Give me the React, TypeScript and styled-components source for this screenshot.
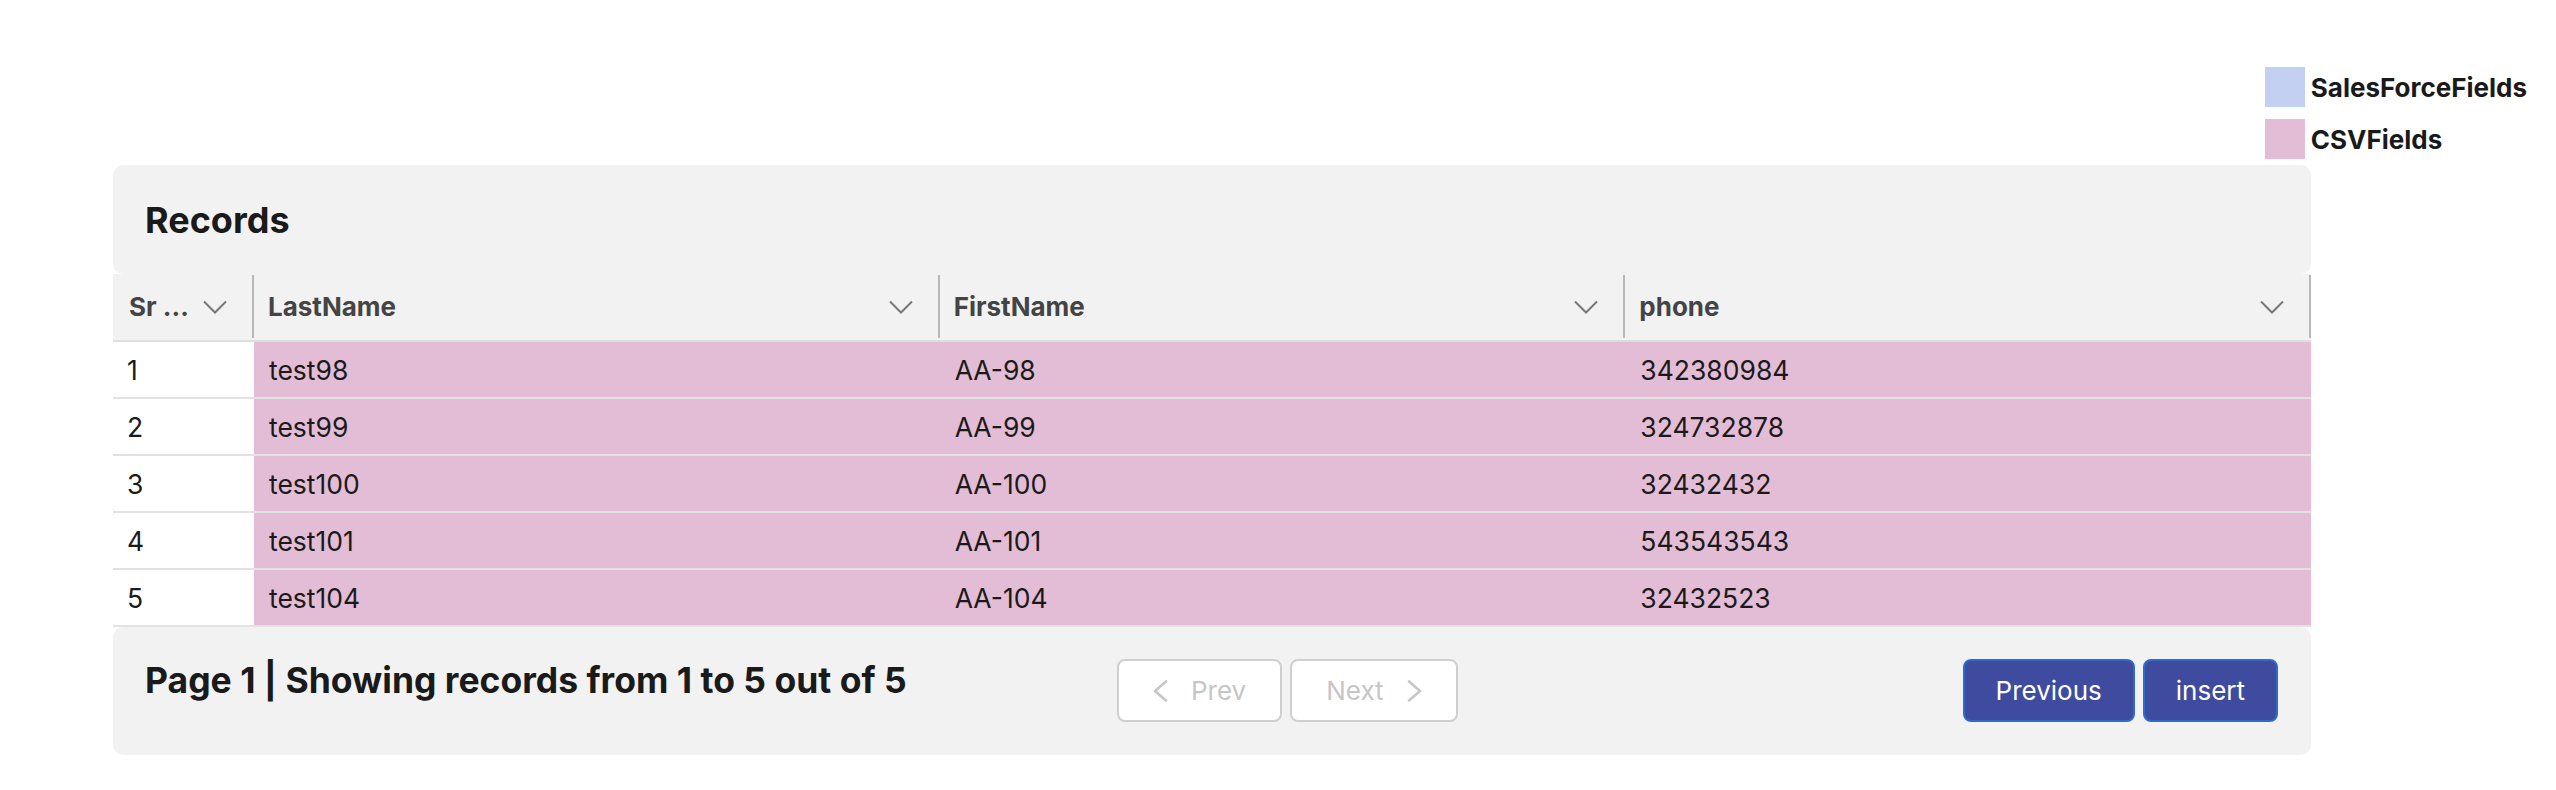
import React from "react";
import styled, { createGlobalStyle } from "styled-components";

const GlobalStyle = createGlobalStyle`
  html, body {
    margin: 0;
    padding: 0;
    background: #ffffff;
    font-family: Inter, "Noto Sans", "Liberation Sans", sans-serif;
    color: #1a1a1a;
  }
  * { box-sizing: border-box; }
`;

const Page = styled.div`
  width: 2556px;
  padding: 67px 0 33px 113px;
  display: flex;
  flex-direction: column;
`;

const LegendRow = styled.div`
  display: flex;
  justify-content: flex-end;
  padding-right: 29px;
`;

const LegendList = styled.div`
  display: flex;
  flex-direction: column;
  gap: 12px;
`;

const LegendItem = styled.div`
  display: flex;
  align-items: center;
  gap: 6px;
`;

const Swatch = styled.span<{ $color: string }>`
  display: block;
  width: 40px;
  height: 40px;
  background: ${(p) => p.$color};
`;

const LegendLabel = styled.span`
  font-size: 26px;
  font-weight: 700;
  color: #1a1a1a;
`;

const Card = styled.div`
  margin-top: 6px;
  width: 2198px;
  display: flex;
  flex-direction: column;
`;

const TitleBox = styled.div`
  height: 109px;
  background: #f2f2f2;
  border-radius: 10px;
  padding: 0 32px;
  display: flex;
  align-items: center;
`;

const Title = styled.h2`
  margin: 0;
  font-size: 36px;
  font-weight: 700;
  color: #1a1a1a;
`;

const Grid = styled.div`
  display: grid;
  grid-template-columns: 141px repeat(3, 1fr);
`;

const HeaderRow = styled(Grid)`
  background: #f2f2f2;
  border-bottom: 2px solid #dedede;
  height: 68px;
`;

const HeaderCell = styled.div<{ $first?: boolean }>`
  display: flex;
  align-items: center;
  justify-content: space-between;
  gap: 6px;
  padding: 0 25px 0 ${(p) => (p.$first ? "16px" : "14px")};
  border-right: 2px solid #b8b8b8;
  margin: 1px 0 2px;
  font-size: 26px;
  font-weight: 700;
  color: #444444;
  white-space: nowrap;
  overflow: hidden;
`;

const DataRow = styled(Grid)`
  border-bottom: 2px solid #e2e2e2;
  height: 57px;
`;

const DataCell = styled.div<{ $first?: boolean }>`
  display: flex;
  align-items: center;
  padding-left: ${(p) => (p.$first ? "14px" : "15px")};
  background: ${(p) => (p.$first ? "#ffffff" : "#e3bcd6")};
  font-size: 26.5px;
  color: #1a1a1a;
`;

const Footer = styled.div`
  background: #f2f2f2;
  border-radius: 10px;
  padding: 32px 33px 33px 32px;
  display: grid;
  grid-template-columns: 972px auto 1fr auto;
  align-items: start;
`;

const FooterText = styled.h3`
  margin: 0;
  font-size: 35.5px;
  font-weight: 700;
  color: #1a1a1a;
  white-space: nowrap;
`;

const Pager = styled.div`
  display: flex;
  gap: 8px;
`;

const PagerButton = styled.button`
  height: 63px;
  padding: 0 34px;
  display: flex;
  align-items: center;
  gap: 23px;
  background: #ffffff;
  border: 2px solid #cfcfcf;
  border-radius: 8px;
  color: #c6c6c6;
  font-family: inherit;
  font-size: 26px;
`;

const Actions = styled.div`
  grid-column: 4;
  display: flex;
  gap: 8px;
`;

const ActionButton = styled.button`
  height: 63px;
  padding: 0 31px;
  background: #3f4b9e;
  border: 2px solid #2f6bcc;
  border-radius: 8px;
  color: #ffffff;
  font-family: inherit;
  font-size: 26px;
`;

const Chevron = () => (
  <svg width="24" height="14" viewBox="0 0 24 14" fill="none">
    <polyline points="1,1.5 12,12.5 23,1.5" stroke="#777777" strokeWidth="2" />
  </svg>
);

const PagerArrow = ({ dir }: { dir: "left" | "right" }) => (
  <svg width="15" height="22" viewBox="0 0 15 22" fill="none">
    <polyline
      points={dir === "left" ? "13,1.5 2,11 13,20.5" : "2,1.5 13,11 2,20.5"}
      stroke="#c6c6c6"
      strokeWidth="2.6"
      strokeLinecap="round"
      strokeLinejoin="round"
    />
  </svg>
);

const rows = [
  { sr: 1, last: "test98", first: "AA-98", phone: "342380984" },
  { sr: 2, last: "test99", first: "AA-99", phone: "324732878" },
  { sr: 3, last: "test100", first: "AA-100", phone: "32432432" },
  { sr: 4, last: "test101", first: "AA-101", phone: "543543543" },
  { sr: 5, last: "test104", first: "AA-104", phone: "32432523" },
];

const columns = ["Sr ...", "LastName", "FirstName", "phone"];

export default function App() {
  return (
    <>
      <GlobalStyle />
      <Page>
        <LegendRow>
          <LegendList>
            <LegendItem>
              <Swatch $color="#c4d0f1" />
              <LegendLabel>SalesForceFields</LegendLabel>
            </LegendItem>
            <LegendItem>
              <Swatch $color="#e3bcd6" />
              <LegendLabel>CSVFields</LegendLabel>
            </LegendItem>
          </LegendList>
        </LegendRow>
        <Card>
          <TitleBox>
            <Title>Records</Title>
          </TitleBox>
          <HeaderRow>
            {columns.map((c, i) => (
              <HeaderCell key={c} $first={i === 0}>
                <span>{c}</span>
                <Chevron />
              </HeaderCell>
            ))}
          </HeaderRow>
          {rows.map((r) => (
            <DataRow key={r.sr}>
              <DataCell $first>{r.sr}</DataCell>
              <DataCell>{r.last}</DataCell>
              <DataCell>{r.first}</DataCell>
              <DataCell>{r.phone}</DataCell>
            </DataRow>
          ))}
          <Footer>
            <FooterText>Page 1 | Showing records from 1 to 5 out of 5</FooterText>
            <Pager>
              <PagerButton disabled>
                <PagerArrow dir="left" />
                Prev
              </PagerButton>
              <PagerButton disabled>
                Next
                <PagerArrow dir="right" />
              </PagerButton>
            </Pager>
            <Actions>
              <ActionButton>Previous</ActionButton>
              <ActionButton>insert</ActionButton>
            </Actions>
          </Footer>
        </Card>
      </Page>
    </>
  );
}
